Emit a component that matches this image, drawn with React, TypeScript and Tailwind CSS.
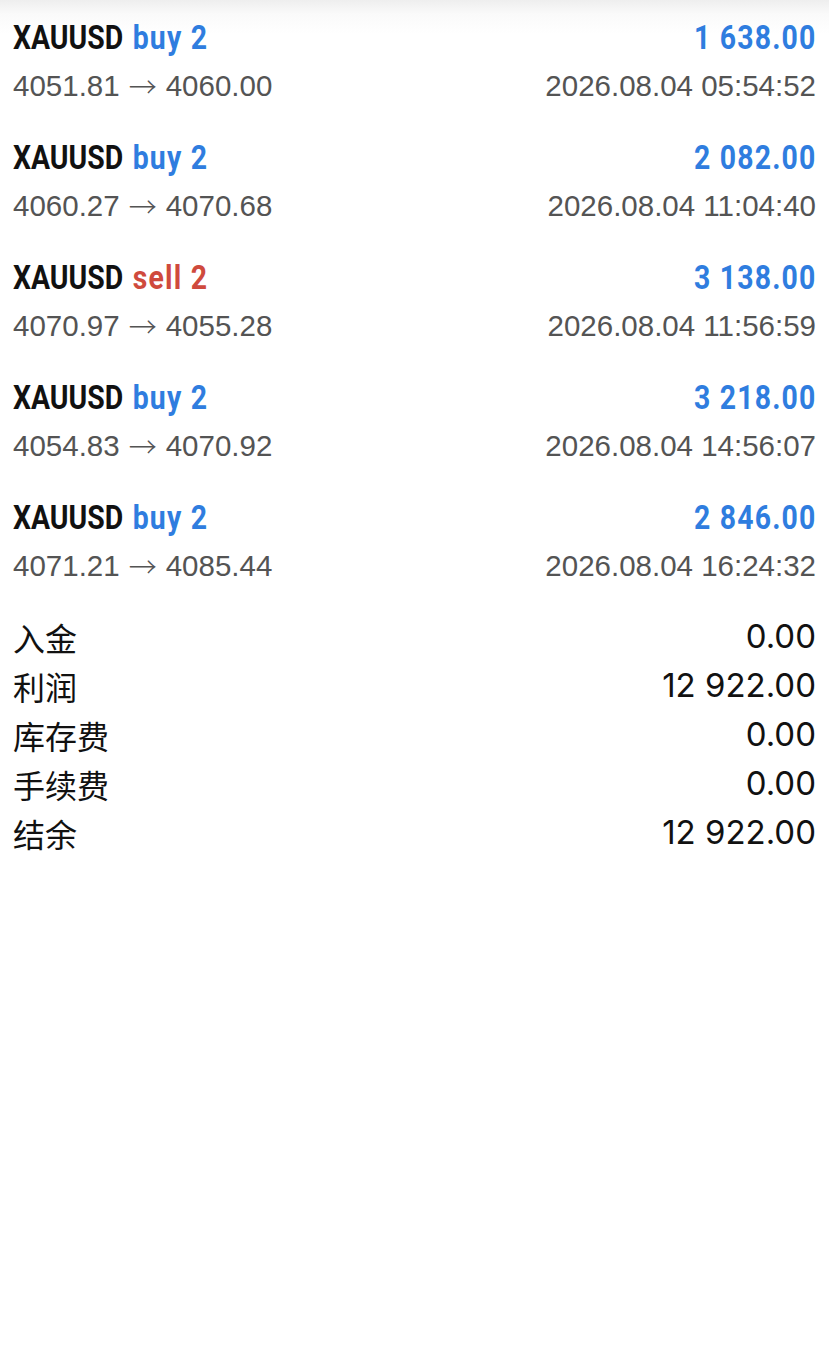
import React from "react";

const trades = [
  { side: "buy", profit: "1 638.00", from: "4051.81", to: "4060.00", time: "2026.08.04 05:54:52" },
  { side: "buy", profit: "2 082.00", from: "4060.27", to: "4070.68", time: "2026.08.04 11:04:40" },
  { side: "sell", profit: "3 138.00", from: "4070.97", to: "4055.28", time: "2026.08.04 11:56:59" },
  { side: "buy", profit: "3 218.00", from: "4054.83", to: "4070.92", time: "2026.08.04 14:56:07" },
  { side: "buy", profit: "2 846.00", from: "4071.21", to: "4085.44", time: "2026.08.04 16:24:32" },
];

const summary = [
  { label: "入金", value: "0.00" },
  { label: "利润", value: "12 922.00" },
  { label: "库存费", value: "0.00" },
  { label: "手续费", value: "0.00" },
  { label: "结余", value: "12 922.00" },
];

export default function App() {
  return (
    <div className="w-[829px] h-[1355px] overflow-hidden bg-[linear-gradient(to_bottom,#eeeeee_0px,#fafafa_14px,#ffffff_34px)] px-[13px] pt-[2px]">
      {trades.map((t, i) => (
        <div key={i} className="py-[12px]">
          <div className="flex items-center justify-between h-[48px] pb-[1px] text-[33px] leading-none font-['Roboto',sans-serif] font-bold">
            <div className="inline-block origin-left scale-x-[0.86] whitespace-nowrap">
              <span className="text-[#111111]">XAUUSD</span>
              <span className={`ml-[11px] tracking-[1.4px] ${t.side === "buy" ? "text-[#2f7ddf]" : "text-[#cf4a3d]"}`}>{t.side} 2</span>
            </div>
            <div className="inline-block origin-right scale-x-[0.86] tracking-[1.4px] mr-[-1px] text-[#2f7ddf] whitespace-nowrap">{t.profit}</div>
          </div>
          <div className="flex items-center justify-between h-[48px] text-[29.5px] leading-none text-[#545454] font-['Liberation_Sans',Arial,sans-serif]">
            <div className="flex items-center">
              <span>{t.from}</span>
              <span className="mx-[9px] text-[28px] font-['Noto_Sans_CJK_SC',sans-serif] font-light">→</span>
              <span>{t.to}</span>
            </div>
            <div>{t.time}</div>
          </div>
        </div>
      ))}
      <div className="mt-[10px]">
        {summary.map((s, i) => (
          <div key={i} className="flex items-center justify-between h-[49px] text-[#111111]">
            <div className="text-[32px] leading-none font-['Noto_Sans_CJK_SC',sans-serif]">{s.label}</div>
            <div className="text-[33px] leading-none font-['Inter','Liberation_Sans',sans-serif]">{s.value}</div>
          </div>
        ))}
      </div>
    </div>
  );
}
